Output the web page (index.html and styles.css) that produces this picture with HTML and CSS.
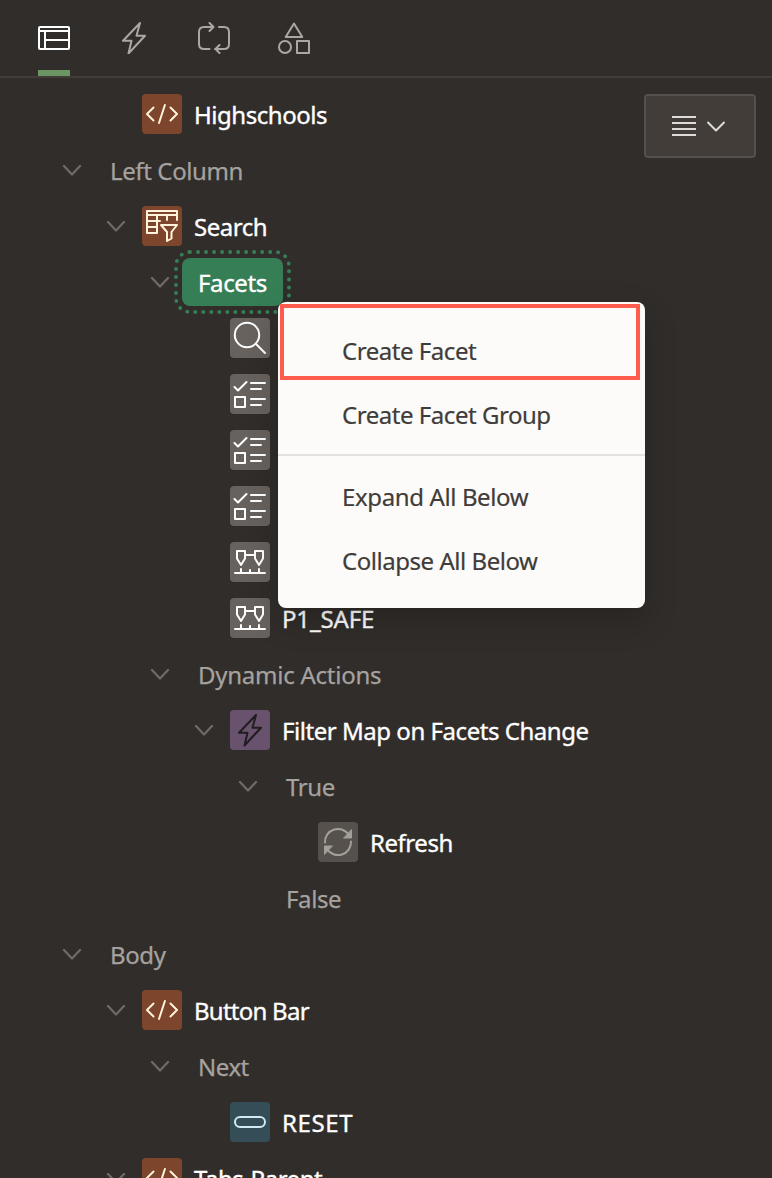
FILE: index.html
```
<!DOCTYPE html>
<html lang="en">
<head>
<meta charset="utf-8">
<title>Page Designer</title>
<link rel="stylesheet" href="styles.css">
</head>
<body>
<svg class="defs" aria-hidden="true">
  <symbol id="chev" viewBox="0 0 20 20"><path d="M2 6l8 8.500L18 6"/></symbol>
  <symbol id="code" viewBox="0 0 40 40"><path d="M11.500 13.500L5 20l6.500 6.500M28.500 13.500L35 20l-6.500 6.500M22.900 11L17 29"/></symbol>
  <symbol id="bolt" viewBox="0 0 40 40"><path d="M26 5L9 22.700h8.500L14.500 35.500 31 17.700h-8.500z"/></symbol>
  <symbol id="search" viewBox="0 0 40 40"><circle cx="17" cy="17" r="12.200"/><path d="M25.800 25.800l9.200 9.200"/></symbol>
  <symbol id="list" viewBox="0 0 40 40"><path d="M4.500 13l3.500 3.500L16.500 8M21 9h14M21 15h10M5 23h10v10H5zM21 25h14M21 31h10"/></symbol>
  <symbol id="range" viewBox="0 0 40 40"><path d="M7 9h8v7.500L11 23l-4-6.500zM25 9h8v7.500L29 23l-4-6.500zM15 13h10M5 31h30M11 27v4M20 28v3M29 27v4"/></symbol>
</svg>
<nav class="tabs">
  <a class="tab active"><svg class="ic" viewBox="0 0 32 32"><path d="M2 5h28q1 0 1 1v20q0 1-1 1H2q-1 0-1-1V6q0-1 1-1zM1 9h30M7 9v18M7 18h24"/></svg></a>
  <a class="tab"><svg class="ic" viewBox="4 4 32 32"><use href="#bolt" width="40" height="40"/></svg></a>
  <a class="tab"><svg class="ic" viewBox="0 0 32 32"><path d="M15 5H6Q1 5 1 10v12q0 5 5 5h5.500M11.500 1l4 4-4 4M21 5h5q5 0 5 5v12q0 5-5 5h-9M21.500 23l-4 4 4 4"/></svg></a>
  <a class="tab"><svg class="ic" viewBox="0 0 32 32"><path d="M16 1.500L24.300 15H7.700zM19 19h12v12H19z"/><circle cx="7" cy="25" r="6"/></svg></a>
</nav>
<main class="tree">
  <div class="row l1"><span class="toggle"></span><svg class="tile brown"><use href="#code"/></svg><span class="name t4">Highschools</span></div>
  <div class="row l0"><svg class="toggle"><use href="#chev" x="16" y="18" width="20" height="20"/></svg><span class="group t3">Left Column</span></div>
  <div class="row l1"><svg class="toggle"><use href="#chev" x="16" y="18" width="20" height="20"/></svg><svg class="tile brown" viewBox="0 0 40 40"><path d="M15 27H5V5h30v9M5 9h30M5 15h13M5 21h10M15 9v18M25 9v5M19 19h16l-5.500 7v6.500L25 35v-9z"/></svg><span class="name t4">Search</span></div>
  <div class="row l2"><svg class="toggle"><use href="#chev" x="16" y="18" width="20" height="20"/></svg><span class="pill t3">Facets</span></div>
  <div class="row l3"><span class="toggle"></span><svg class="tile gray"><use href="#search"/></svg></div>
  <div class="row l3"><span class="toggle"></span><svg class="tile gray"><use href="#list"/></svg></div>
  <div class="row l3"><span class="toggle"></span><svg class="tile gray"><use href="#list"/></svg></div>
  <div class="row l3"><span class="toggle"></span><svg class="tile gray"><use href="#list"/></svg></div>
  <div class="row l3"><span class="toggle"></span><svg class="tile gray"><use href="#range"/></svg></div>
  <div class="row l3"><span class="toggle"></span><svg class="tile gray"><use href="#range"/></svg><span class="name t1">P1_SAFE</span></div>
  <div class="row l2"><svg class="toggle"><use href="#chev" x="16" y="18" width="20" height="20"/></svg><span class="group t2">Dynamic Actions</span></div>
  <div class="row l3"><svg class="toggle"><use href="#chev" x="16" y="18" width="20" height="20"/></svg><svg class="tile purple"><use href="#bolt"/></svg><span class="name t4">Filter Map on Facets Change</span></div>
  <div class="row l4"><svg class="toggle"><use href="#chev" x="16" y="18" width="20" height="20"/></svg><span class="group t3">True</span></div>
  <div class="row l5"><span class="toggle"></span><svg class="tile dim" viewBox="0 0 40 40"><path d="M7 20.500A13 13 0 0 1 31 13M33 19.500A13 13 0 0 1 9 27"/><path class="fill" d="M33.500 8v8H26zM6.500 32v-8H14z"/></svg><span class="name t4">Refresh</span></div>
  <div class="row l4"><span class="toggle"></span><span class="group t3">False</span></div>
  <div class="row l0"><svg class="toggle"><use href="#chev" x="16" y="18" width="20" height="20"/></svg><span class="group t3">Body</span></div>
  <div class="row l1"><svg class="toggle"><use href="#chev" x="16" y="18" width="20" height="20"/></svg><svg class="tile brown"><use href="#code"/></svg><span class="name t5">Button Bar</span></div>
  <div class="row l2"><svg class="toggle"><use href="#chev" x="16" y="18" width="20" height="20"/></svg><span class="group t4">Next</span></div>
  <div class="row l3"><span class="toggle"></span><svg class="tile teal" viewBox="0 0 40 40"><rect x="5" y="15" width="30" height="10" rx="5"/></svg><span class="name wide">RESET</span></div>
  <div class="row l1"><svg class="toggle"><use href="#chev" x="16" y="18" width="20" height="20"/></svg><svg class="tile brown"><use href="#code"/></svg><span class="name t4">Tabs-Parent</span></div>
</main>
<button class="view-menu"><svg class="view-icon" viewBox="0 0 56 24"><path d="M0 3h24M0 9h24M0 15h24M0 21h24M35.500 8l8.500 8.500L52.500 8"/></svg></button>
<div class="menu">
  <div class="item t4">Create Facet</div>
  <div class="item t4">Create Facet Group</div>
  <div class="sep"></div>
  <div class="item t3">Expand All Below</div>
  <div class="item t4">Collapse All Below</div>
  <div class="highlight"></div>
</div>
</body>
</html>
```
FILE: styles.css
```
* { box-sizing: border-box; }
body {
  margin: 0;
  width: 772px;
  height: 1178px;
  overflow: hidden;
  position: relative;
  background: #312d2a;
  font: 24px/56px "Noto Sans", "Open Sans", sans-serif;
}
svg { fill: none; stroke-width: 2; stroke-linecap: round; stroke-linejoin: round; }
.defs { position: absolute; width: 0; height: 0; }

.tabs { display: flex; gap: 48px; height: 78px; padding-left: 38px; border-bottom: 2px solid #423d39; }
.tab { width: 32px; height: 76px; padding-top: 22px; stroke: #aaa7a4; }
.tab.active { stroke: #fff; border-bottom: 6px solid #6b9562; }
.ic { display: block; width: 32px; height: 32px; }

.tree { padding-top: 8px; }
.row { display: flex; align-items: center; height: 56px; white-space: nowrap; }
.l0 { padding-left: 46px; }
.l1 { padding-left: 90px; }
.l2 { padding-left: 134px; }
.l3 { padding-left: 178px; }
.l4 { padding-left: 222px; }
.l5 { padding-left: 266px; }
.toggle { width: 52px; height: 56px; flex: none; stroke: #6f6a67; stroke-width: 2.3; }
.tile { width: 40px; height: 40px; border-radius: 4px; flex: none; }
.brown { background: #7d462c; stroke: #fff3dc; }
.gray { background: #67625e; stroke: #fff; }
.purple { background: #69526d; stroke: #201c20; }
.dim { background: #56514d; stroke: #a3a09c; }
.dim .fill { fill: #a3a09c; stroke-width: 1; }
.teal { background: #354d56; stroke: #cfeaf5; }
.name { margin-left: 12px; padding-top: 2px; color: #fff; -webkit-text-stroke: .35px #fff; }
.group { margin-left: 12px; padding-top: 2px; color: #a5a29f; -webkit-text-stroke: .25px #a5a29f; }
.t1 { letter-spacing: -.15px; }
.t2 { letter-spacing: -.25px; }
.t3 { letter-spacing: -.38px; }
.t4 { letter-spacing: -.46px; }
.t5 { letter-spacing: -.75px; }
.wide { letter-spacing: .6px; }
.pill {
  width: 101px;
  height: 48px;
  margin-left: -4px;
  padding-left: 16px;
  border-radius: 8px;
  outline: 4px dotted #367f56;
  outline-offset: 4px;
  background: #367f56;
  color: #fff;
  line-height: 50px;
  -webkit-text-stroke: .35px #fff;
}

.view-menu {
  position: absolute;
  left: 644px;
  top: 94px;
  width: 112px;
  height: 64px;
  padding: 0 0 0 26px;
  border: 2px solid #54504c;
  border-radius: 4px;
  background: #423d38;
}
.view-icon { display: block; width: 56px; height: 24px; stroke: #dedbd8; stroke-linecap: butt; }

.menu {
  position: absolute;
  left: 278px;
  top: 302px;
  width: 367px;
  height: 306px;
  padding: 16px 0;
  border-radius: 8px;
  background: #fcfbfa;
  color: #403c39;
  line-height: 66px;
  box-shadow: 0 12px 32px rgba(0, 0, 0, .22);
}
.item { height: 64px; padding-left: 64px; white-space: nowrap; -webkit-text-stroke: .2px #403c39; }
.sep { height: 2px; margin: 8px 0; background: #e4e2e0; }
.highlight { position: absolute; left: 2px; top: 2px; width: 360px; height: 76px; border: 4px solid #ff5c4d; }
```
